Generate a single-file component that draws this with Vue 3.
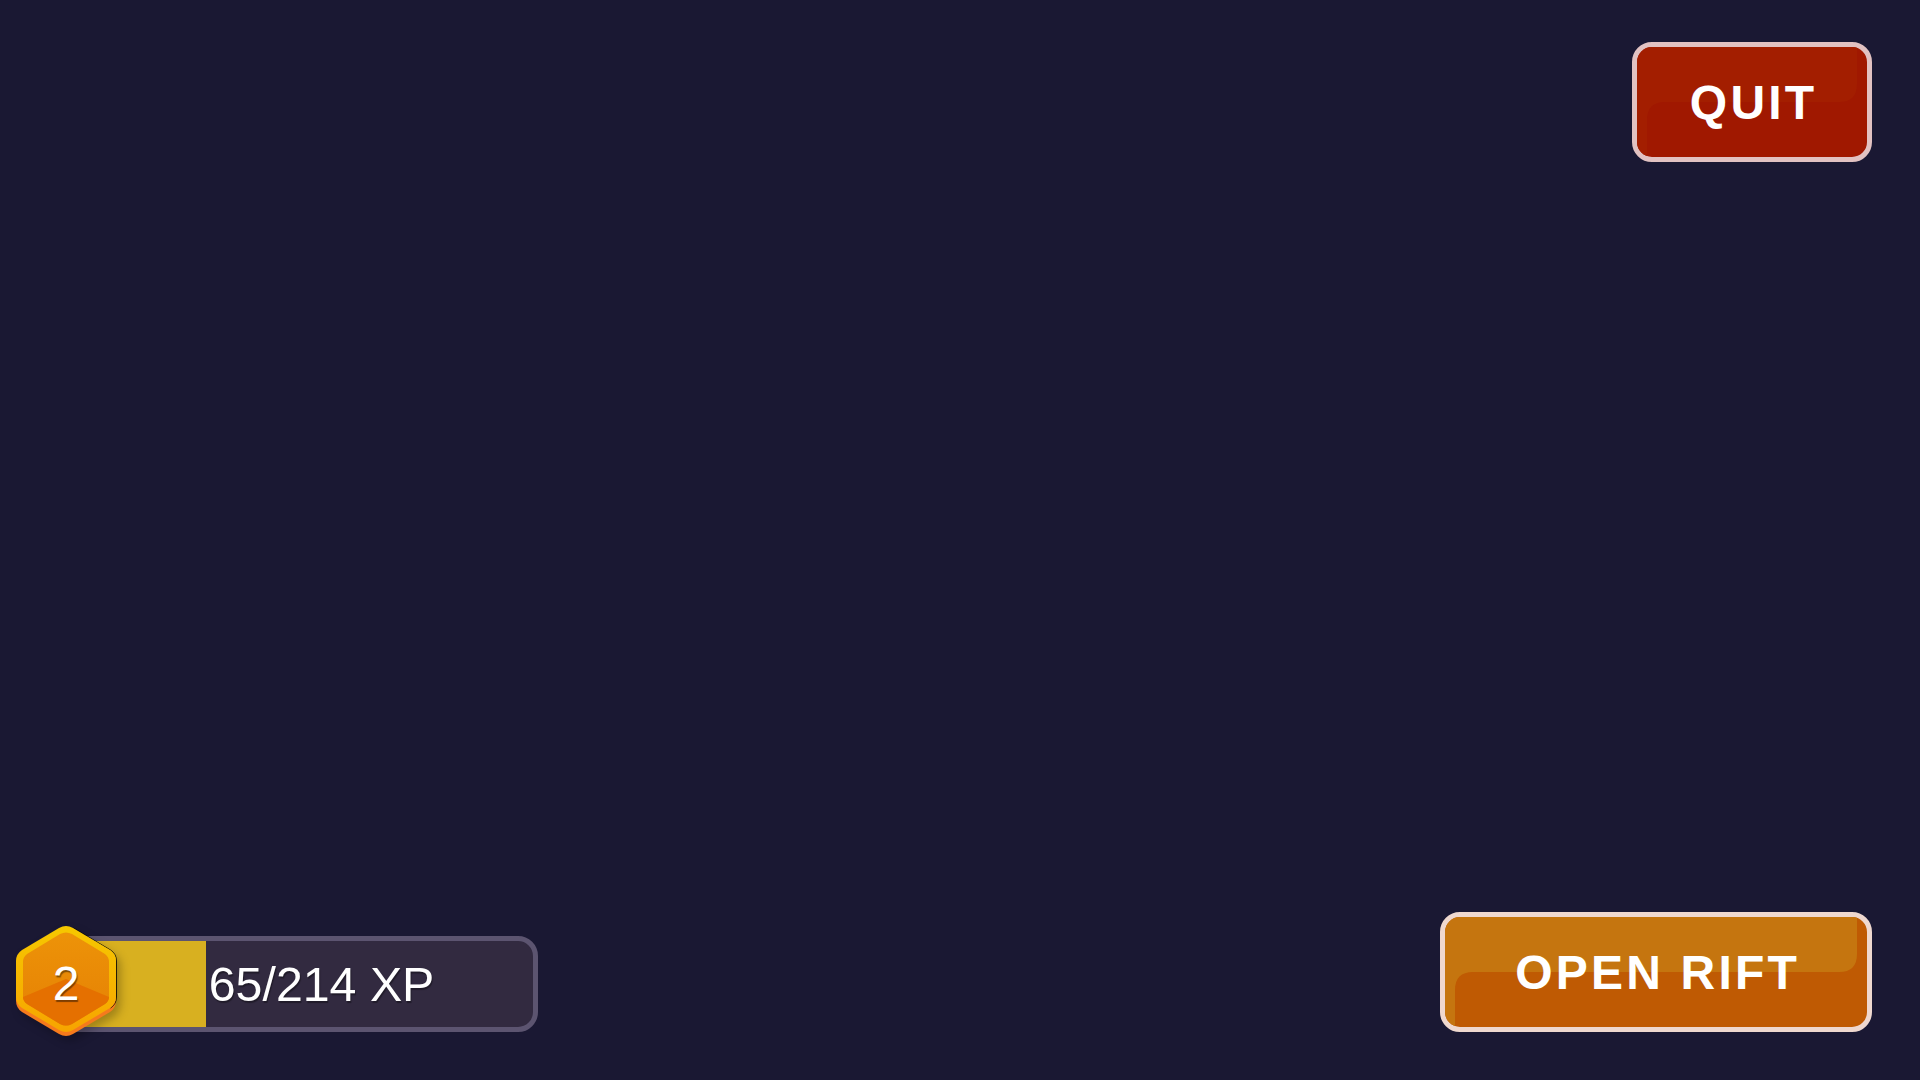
<script setup>
const xp = 65
const maxXp = 214
const fillWidth = `${(xp / maxXp) * 100}%`

function glossPath(w, h, split, inset) {
  const r = 18
  return `M0 0H${w - inset}V${split - r}Q${w - inset} ${split} ${w - inset - r} ${split}H${inset + r}Q${inset} ${split} ${inset} ${split + r}V${h}H0Z`
}
const quitGloss = glossPath(230, 110, 55, 10)
const riftGloss = glossPath(422, 110, 55, 10)
</script>

<template>
  <main class="screen">
    <div class="top-row">
      <button class="game-btn quit" type="button">
        <svg class="gloss" viewBox="0 0 230 110" aria-hidden="true"><path :d="quitGloss" /></svg>
        <span class="label">QUIT</span>
      </button>
    </div>

    <div class="bottom-row">
      <div class="level">
        <div class="xp-bar">
          <div class="xp-fill" :style="{ width: fillWidth }"></div>
          <span class="xp-text">{{ xp }}/{{ maxXp }} XP</span>
        </div>
        <div class="badge">
          <svg class="hex" viewBox="0 0 100 114" aria-hidden="true">
            <defs>
              <linearGradient id="rim" x1="0" y1="0" x2="0" y2="1">
                <stop offset="0" stop-color="#f6c800" />
                <stop offset="1" stop-color="#f7a400" />
              </linearGradient>
              <linearGradient id="face" x1="0" y1="0" x2="0" y2="1">
                <stop offset="0" stop-color="#ed9308" />
                <stop offset="1" stop-color="#e58004" />
              </linearGradient>
            </defs>
            <path class="hex-edge" d="M43 7Q50 3 57 7L94 29Q100 33 100 40L100 76Q100 83 94 87L57 109Q50 113 43 109L6 87Q0 83 0 76L0 40Q0 33 6 29Z" />
            <path class="hex-line" d="M57 3L94 25Q100 29 100 36L100 72Q100 79 94 83" />
            <path fill="url(#rim)" d="M43 3Q50 -1 57 3L94 25Q100 29 100 36L100 72Q100 79 94 83L57 105Q50 109 43 105L6 83Q0 79 0 72L0 36Q0 29 6 25Z" />
            <path fill="url(#face)" d="M44 9Q50 6 56 9L89 29Q93 32 93 37L93 72Q93 76 89 79L56 99Q50 102 44 99L11 79Q7 76 7 72L7 37Q7 32 11 29Z" />
            <path class="hex-low" d="M7 72L50 54L93 72Q93 76 89 79L56 99Q50 102 44 99L11 79Q7 76 7 72Z" />
          </svg>
          <span class="badge-num">2</span>
        </div>
      </div>

      <button class="game-btn rift" type="button">
        <svg class="gloss" viewBox="0 0 422 110" aria-hidden="true"><path :d="riftGloss" /></svg>
        <span class="label">OPEN RIFT</span>
      </button>
    </div>
  </main>
</template>

<style scoped>
.screen {
  box-sizing: border-box;
  width: 100%;
  height: 100vh;
  padding: 42px 48px 48px 16px;
  display: flex;
  flex-direction: column;
  justify-content: space-between;
  background: #1a1833;
  overflow: hidden;
}

.top-row {
  display: flex;
  justify-content: flex-end;
}

.bottom-row {
  display: flex;
  justify-content: space-between;
  align-items: flex-end;
}

.game-btn {
  position: relative;
  box-sizing: border-box;
  height: 120px;
  padding: 0;
  border: 5px solid;
  border-radius: 20px;
  display: flex;
  align-items: center;
  justify-content: center;
  overflow: hidden;
  font-family: "Liberation Sans", Arial, sans-serif;
  font-size: 48px;
  font-weight: 700;
  letter-spacing: 3.2px;
  color: #fff;
}

.quit {
  width: 240px;
  background: #a01800;
  border-color: #e2c2c2;
}

.quit .gloss path {
  fill: #a31e00;
}

.rift {
  width: 432px;
  background: #bf5a03;
  border-color: #efd8cf;
}

.rift .gloss path {
  fill: #c5750f;
}

.gloss {
  position: absolute;
  inset: 0;
  width: 100%;
  height: 100%;
}

.label {
  position: relative;
  padding-left: 3.2px;
}

.level {
  position: relative;
  width: 522px;
  height: 107px;
  display: flex;
  align-items: flex-end;
  justify-content: flex-end;
}

.xp-bar {
  box-sizing: border-box;
  width: 480px;
  height: 96px;
  border: 5px solid #5c5470;
  border-radius: 20px;
  background: #322a40;
  display: flex;
  align-items: center;
  overflow: hidden;
}

.xp-fill {
  flex: none;
  height: 100%;
  background: #d8b020;
}

.xp-text {
  padding-left: 3px;
  font-family: "Liberation Sans", Arial, sans-serif;
  font-size: 48.3px;
  line-height: 1;
  color: #fff;
  text-shadow: 1px 2px 1px rgba(0, 0, 0, 0.35);
  white-space: nowrap;
}

.badge {
  position: absolute;
  left: 0;
  top: 0;
  width: 100px;
  height: 114px;
}

.hex {
  display: block;
  width: 100px;
  height: 114px;
  overflow: visible;
  filter: drop-shadow(4px 5px 4px rgba(0, 0, 0, 0.25));
}

.hex-edge {
  fill: #f67a1c;
}

.hex-line {
  fill: none;
  stroke: #000;
  stroke-opacity: 0.8;
  stroke-width: 1;
  transform: translate(0.5px, 0);
}

.hex-low {
  fill: #e57000;
}

.badge-num {
  position: absolute;
  left: 0;
  right: 0;
  top: 35px;
  text-align: center;
  font-family: "Liberation Sans", Arial, sans-serif;
  font-size: 48px;
  line-height: 1;
  color: #fff;
  text-shadow: 1px 2px 1px rgba(0, 0, 0, 0.45);
}
</style>
